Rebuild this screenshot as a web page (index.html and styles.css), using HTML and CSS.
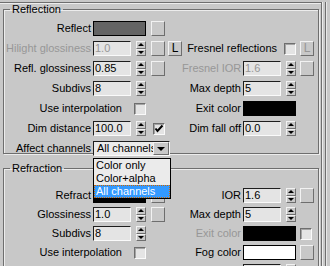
FILE: index.html
```html
<!DOCTYPE html>
<html lang="en">

<head>
    <meta charset="UTF-8">
    <meta name="viewport" content="width=device-width, initial-scale=1.0">
    <title>Basic parameters</title>
    <link rel="stylesheet" href="styles.css">
</head>

<body>
    <div class="frame">
        <div class="panel">

            <fieldset class="group reflection">
                <legend>Reflection</legend>
                <div class="rows">
                    <div class="row">
                        <span class="lbl">Reflect</span>
                        <span class="swatch span2 grey"></span>
                        <span class="btn"></span>
                    </div>
                    <div class="row">
                        <span class="lbl off">Hilight glossiness</span>
                        <span class="fld off">1.0</span>
                        <span class="spin"><i class="up"></i><i class="down"></i></span>
                        <span class="btn"></span>
                        <span class="btn lock">L</span>
                        <span class="lbl span2 wide">Fresnel reflections</span>
                        <span class="chk"></span>
                        <span class="btn lock off">L</span>
                    </div>
                    <div class="row">
                        <span class="lbl">Refl. glossiness</span>
                        <span class="fld">0.85</span>
                        <span class="spin"><i class="up"></i><i class="down"></i></span>
                        <span class="btn"></span>
                        <span class="lbl right off">Fresnel IOR</span>
                        <span class="fld off">1.6</span>
                        <span class="spin"><i class="up"></i><i class="down"></i></span>
                        <span class="btn"></span>
                    </div>
                    <div class="row">
                        <span class="lbl">Subdivs</span>
                        <span class="fld">8</span>
                        <span class="spin"><i class="up"></i><i class="down"></i></span>
                        <span class="lbl right">Max depth</span>
                        <span class="fld">5</span>
                        <span class="spin"><i class="up"></i><i class="down"></i></span>
                    </div>
                    <div class="row">
                        <span class="lbl span2 long">Use interpolation</span>
                        <span class="chk"></span>
                        <span class="lbl right">Exit color</span>
                        <span class="swatch span2 black"></span>
                    </div>
                    <div class="row">
                        <span class="lbl">Dim distance</span>
                        <span class="fld">100.0</span>
                        <span class="spin"><i class="up"></i><i class="down"></i></span>
                        <span class="chk checked">
                            <svg width="10" height="10" viewBox="0 0 10 10"><polyline points="1.5,4.5 3.5,7 8.5,1.5" fill="none" stroke="#000" stroke-width="2"/></svg>
                        </span>
                        <span class="lbl right">Dim fall off</span>
                        <span class="fld">0.0</span>
                        <span class="spin"><i class="up"></i><i class="down"></i></span>
                    </div>
                    <div class="row last">
                        <span class="lbl">Affect channels</span>
                        <div class="combo">
                            <span class="combo-text">All channels</span>
                            <span class="combo-arrow"><i class="down"></i></span>
                            <ul class="list">
                                <li>Color only</li>
                                <li>Color+alpha</li>
                                <li class="sel">All channels</li>
                            </ul>
                        </div>
                    </div>
                </div>
            </fieldset>

            <fieldset class="group refraction">
                <legend>Refraction</legend>
                <div class="rows">
                    <div class="row">
                        <span class="lbl">Refract</span>
                        <span class="swatch span2 black"></span>
                        <span class="btn"></span>
                        <span class="lbl right">IOR</span>
                        <span class="fld">1.6</span>
                        <span class="spin"><i class="up"></i><i class="down"></i></span>
                        <span class="btn"></span>
                    </div>
                    <div class="row">
                        <span class="lbl">Glossiness</span>
                        <span class="fld">1.0</span>
                        <span class="spin"><i class="up"></i><i class="down"></i></span>
                        <span class="btn"></span>
                        <span class="lbl right">Max depth</span>
                        <span class="fld">5</span>
                        <span class="spin"><i class="up"></i><i class="down"></i></span>
                    </div>
                    <div class="row">
                        <span class="lbl">Subdivs</span>
                        <span class="fld">8</span>
                        <span class="spin"><i class="up"></i><i class="down"></i></span>
                        <span class="lbl right off">Exit color</span>
                        <span class="swatch span2 black"></span>
                        <span class="chk tail"></span>
                    </div>
                    <div class="row">
                        <span class="lbl span2 long">Use interpolation</span>
                        <span class="chk"></span>
                        <span class="lbl right">Fog color</span>
                        <span class="swatch span2 white"></span>
                        <span class="btn"></span>
                    </div>
                    <div class="row">
                        <span class="fld col7"></span>
                        <span class="spin"><i class="up"></i><i class="down"></i></span>
                    </div>
                </div>
            </fieldset>

        </div>
    </div>
</body>

</html>
```

FILE: styles.css
```css
body {
    margin: 0;
    height: 266px;
    overflow: hidden;
    background-color: #c8c8c8;
    font-family: "Liberation Sans", Arial, sans-serif;
    font-size: 11px;
    color: #000;
}

.frame {
    width: 325px;
    height: 266px;
    border-right: 1px solid #6e6e6e;
    box-shadow: 1px 0 0 #e8e8e8;
}

.panel {
    margin-top: 2px;
    width: 322px;
    height: 264px;
    box-sizing: border-box;
    border-top: 1px solid #6e6e6e;
    border-right: 1px solid #6e6e6e;
    box-shadow: inset 0 1px 0 #ececec, 1px 0 0 #ececec;
}

/* group boxes */

.group {
    margin: 0 0 0 3px;
    padding: 0;
    width: 316px;
    box-sizing: border-box;
    border: 1px solid #6e6e6e;
    box-shadow: 1px 1px 0 #ececec, inset 1px 1px 0 #ececec;
}

.group legend {
    margin-left: 6px;
    padding: 0 2px;
    line-height: 13px;
}

.rows {
    display: flex;
    flex-direction: column;
    gap: 5px;
}

.reflection .rows {
    padding-top: 5px;
    margin-bottom: -3px;
}

.refraction {
    margin-top: 8px;
}

.refraction .rows {
    padding-top: 13px;
    gap: 4px;
}

.row {
    display: grid;
    grid-template-columns: 89px 38px 15px 19px 17px 61px 38px 15px 18px;
    height: 15px;
}

/* labels */

.lbl {
    line-height: 15px;
    text-align: right;
    white-space: nowrap;
    padding-right: 2px;
}

.lbl.long {
    padding-right: 9px;
}

.lbl.wide {
    padding-right: 4px;
}

.lbl.right {
    grid-column-start: 6;
}

.col7 {
    grid-column-start: 7;
}

.span2 {
    grid-column-end: span 2;
}

.off {
    color: #979797;
}

/* edit boxes */

.fld {
    box-sizing: border-box;
    height: 15px;
    line-height: 13px;
    padding-left: 1px;
    border: 1px solid;
    border-color: #1e1e1e #fafafa #fafafa #1e1e1e;
    background-color: #e4e4e4;
    overflow: hidden;
}

/* spinners */

.spin {
    justify-self: end;
    width: 10px;
    height: 15px;
    display: flex;
    flex-direction: column;
}

.spin i {
    flex: 1;
    display: flex;
    align-items: center;
    justify-content: center;
    box-sizing: border-box;
    border: 1px solid;
    border-color: #f2f2f2 #6e6e6e #6e6e6e #f2f2f2;
}

.up::after,
.down::after {
    content: '';
    border-left: 3px solid transparent;
    border-right: 3px solid transparent;
}

.up::after {
    border-bottom: 3px solid #000;
}

.down::after {
    border-top: 3px solid #000;
}

/* map buttons */

.btn {
    justify-self: end;
    width: 14px;
    height: 15px;
    box-sizing: border-box;
    border: 1px solid;
    border-color: #f2f2f2 #6e6e6e #6e6e6e #f2f2f2;
    text-align: center;
    line-height: 13px;
}

.lock {
    font-size: 12px;
}

/* color swatches */

.swatch {
    box-sizing: border-box;
    height: 15px;
    border: 1px solid #000;
}

.grey {
    background-color: #646464;
}

.black {
    background-color: #000;
}

.white {
    background-color: #fff;
}

/* checkboxes */

.chk {
    justify-self: end;
    align-self: center;
    width: 12px;
    height: 12px;
    box-sizing: border-box;
    border: 1px solid;
    border-color: #6e6e6e #fafafa #fafafa #6e6e6e;
    box-shadow: inset 1px 1px 0 #a4a4a4;
    background-color: #e4e4e4;
}

.chk svg {
    display: block;
}

.chk.tail {
    justify-self: start;
    margin-left: 4px;
}

/* drop down */

.combo {
    position: relative;
    grid-column-end: span 4;
    width: 77px;
    height: 15px;
    box-sizing: border-box;
    display: flex;
    border: 1px solid;
    border-color: #1e1e1e #fafafa #fafafa #1e1e1e;
    background-color: #ebebeb;
}

.combo-text {
    flex: 1;
    overflow: hidden;
    white-space: nowrap;
    line-height: 13px;
    padding-left: 3px;
}

.combo-arrow {
    flex: none;
    width: 16px;
    display: flex;
    align-items: center;
    justify-content: center;
    box-sizing: border-box;
    border: 1px solid;
    border-color: #f2f2f2 #6e6e6e #6e6e6e #f2f2f2;
    background-color: #c8c8c8;
}

.combo-arrow .down::after {
    display: block;
    border-left-width: 4px;
    border-right-width: 4px;
    border-top-width: 4px;
}

.list {
    position: absolute;
    top: 16px;
    left: -1px;
    width: 78px;
    margin: 0;
    padding: 0;
    list-style: none;
    box-sizing: border-box;
    border: 1px solid #000;
    background-color: #ebebeb;
}

.list li {
    height: 13px;
    line-height: 13px;
    padding-left: 2px;
}

.list .sel {
    background-color: #3399ff;
    color: #fff;
    outline: 1px dotted #cc6600;
    outline-offset: -1px;
}
```
